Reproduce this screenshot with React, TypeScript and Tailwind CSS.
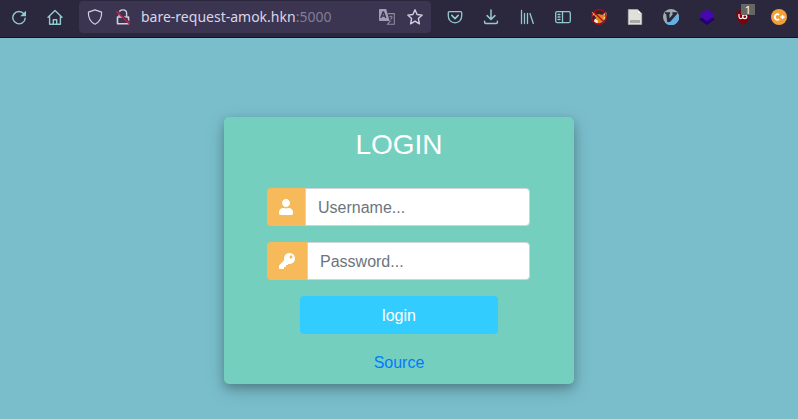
import type { ReactNode } from "react";
import { FaKey, FaUser } from "react-icons/fa";

function Cell({ children, label }: { children: ReactNode; label: string }) {
  return (
    <button aria-label={label} className="flex h-[34px] w-9 shrink-0 items-center justify-center">
      {children}
    </button>
  );
}

const line = {
  width: 16,
  height: 16,
  viewBox: "0 0 16 16",
  fill: "none",
  stroke: "currentColor",
  strokeWidth: 1.2,
  strokeLinecap: "round",
  strokeLinejoin: "round",
} as const;

function Toolbar() {
  return (
    <header className="flex h-[38px] items-start border-b border-[#15131f] bg-[#2b273c] text-[#91cbd0]">
      <div className="flex w-[79px] shrink-0 pl-px">
        <Cell label="Reload">
          <svg {...line} strokeWidth="1.4">
            <path d="M12.9 4.8A6.2 6.2 0 1 0 14.2 9.2" />
            <path d="M15 1.8v5.4H9.2z" fill="currentColor" stroke="none" />
          </svg>
        </Cell>
        <Cell label="Home">
          <svg {...line} strokeWidth="1.4">
            <path d="M1 8.3 8 1.6l7 6.7M2.6 7.2v8h10.8v-8M6.3 15v-4.3h3.4V15" />
          </svg>
        </Cell>
      </div>
      <div className="mt-px flex h-8 w-[352px] items-center rounded-[4px] bg-[#3b3552] pl-2 text-[#d2cedf]">
        <svg {...line}>
          <path d="M8 .9 14.6 3.1C14.9 9.1 12.5 13 8 15.2 3.5 13 1.1 9.1 1.4 3.1z" />
        </svg>
        <svg {...line} className="ml-3" strokeLinecap="butt">
          <path d="M4.2 7.5V4.2c0-4.4 7.4-4.4 7.4 0v3.3" strokeWidth="1.4" />
          <path d="M2.5 8h11v6.8h-11z" strokeWidth="1.6" />
          <path d="m2.3 1.8 12.8 12.2" stroke="#3b3552" strokeWidth="1.4" />
          <path d="m1.2 2.2 13.2 12.8" stroke="#d7143f" strokeWidth="1.4" />
        </svg>
        <span className="ml-[10px] whitespace-nowrap font-['Noto_Sans',sans-serif] text-[14px] leading-5 text-[#dad6e6]">
          bare-request-amok.hkn<span className="text-[#827d95]">:5000</span>
        </span>
        <div className="ml-auto flex pr-2">
          <svg width="16" height="16" viewBox="0 0 16 16">
            <path d="M9 4.6h6.3v10.7H8.5L11 12" stroke="#8f8aa2" strokeWidth="1.1" fill="none" />
            <path d="M1 0h6.2l.9 3 2.5 9H1a1 1 0 0 1-1-1V1a1 1 0 0 1 1-1z" fill="#a29db3" />
            <path d="m1.8 9 2.3-6h.4l2.3 6M2.6 7h3.4" stroke="#3b3552" strokeWidth="1.4" fill="none" />
            <path d="M10.7 8c.6-1.2 2.7-.8 2.3.5-.2.8-1.2.9-1.2 2.1M11.8 11.7v1.1" stroke="#8f8aa2" strokeWidth="1.1" fill="none" />
          </svg>
          <svg {...line} className="ml-3" strokeWidth="1.4">
            <path d="m8 .8 2.1 4.7 5.1.6-3.8 3.5 1 5.2L8 12.2l-4.4 2.6 1-5.2L.8 6.1l5.1-.6z" />
          </svg>
        </div>
      </div>
      <nav className="ml-[6px] flex shrink-0">
        <Cell label="Pocket">
          <svg {...line} strokeWidth="1.3">
            <path d="M2.3 2.6h11.4a1 1 0 0 1 1 1V7c0 4-2.8 6.8-6.7 6.8S1.3 11 1.3 7V3.6a1 1 0 0 1 1-1z" />
            <path d="m4.8 6.4 3.2 3.2 3.2-3.2" strokeWidth="1.6" />
          </svg>
        </Cell>
        <Cell label="Downloads">
          <svg {...line} strokeWidth="1.5">
            <path d="M8 .9v9.4M4.1 6.6 8 10.5l3.9-3.9M1.6 12.3v1c0 .7.5 1.2 1.2 1.2h10.4c.7 0 1.2-.5 1.2-1.2v-1" />
          </svg>
        </Cell>
        <Cell label="Library">
          <svg {...line} strokeWidth="1.3">
            <path d="M2.5 1.5v13M5.5 4.5v10M8.5 4.5v10M11 4.5l3.3 10" />
          </svg>
        </Cell>
        <Cell label="Sidebar">
          <svg {...line} strokeWidth="1.3">
            <rect x=".7" y="2.6" width="14.6" height="11" rx="1.5" />
            <path d="M7.5 2.6v11M3 5.5h2M3 8h2M3 10.5h2" />
          </svg>
        </Cell>
        <Cell label="FoxyProxy">
          <svg width="16" height="16" viewBox="0 0 16 16">
            <circle cx="8" cy="8" r="7" fill="#35202d" />
            <path d="m1 3 3.4 2.7L8 5l3.2 1 3.3-2.5.5 5-3 4.5-4 1.5-4.5-1L5 9z" fill="#df8420" />
            <path d="m.8 3 2.8 1.2-2 3.2zM4 9.5 7.2 12l-1 2.6-3.5-2zM12.5 5l2.7-1.8.4 3.8z" fill="#eee9e1" />
            <path d="M12.5 8.5 14 8l-1 3z" fill="#fff" />
            <circle cx="8" cy="8" r="7.3" fill="none" stroke="#b30b12" strokeWidth="1.2" />
            <path d="m2.8 2.8 10.4 10.4" stroke="#b30b12" strokeWidth="1.3" />
          </svg>
        </Cell>
        <Cell label="Page">
          <svg width="16" height="16" viewBox="0 0 16 16">
            <path d="M1.3.5h9.4l4 4v11H1.3z" fill="#e0e0dc" stroke="#b7b7b4" strokeWidth=".7" />
            <path d="M10.5.7v4h4z" fill="#fff" stroke="#bcbcbc" strokeWidth=".5" />
            <path d="M3.5 11.7h9v1.6h-9z" fill="#bbb" stroke="#777" strokeWidth=".6" />
          </svg>
        </Cell>
        <Cell label="Vimium">
          <svg width="16" height="16" viewBox="0 0 16 16">
            <circle cx="8" cy="8" r="8" fill="#a4a7ab" />
            <path d="M15.8 6A8 8 0 0 1 1.7 13z" fill="#65afe1" />
            <path d="M2 3.3h5.2v1.3l-.8.4.2 4.2L10 5l-.7-.4V3.3h5v1.5L7 13H4.2L3.2 5 2 4.7z" fill="#202a40" />
          </svg>
        </Cell>
        <Cell label="Layers">
          <svg width="16" height="16" viewBox="0 0 16 16">
            <path d="m0 10.2 8-4 8 4-8 5.8z" fill="#24006f" />
            <path d="m0 6.2 8-6 8 6-8 6z" fill="#4807b3" />
          </svg>
        </Cell>
        <div className="relative">
          <Cell label="uBlock Origin">
            <svg width="16" height="16" viewBox="0 0 16 16">
              <path d="M8 0c2 1.4 4.3 2 6.6 2 .2 6.5-.8 10.4-6.6 14C2.2 12.4 1.2 8.5 1.4 2 3.7 2 6 1.4 8 0z" fill="#800009" />
              <path d="M4 5v2.8c0 2.5 3.8 2.5 3.8 0V5v2.8c0 2.5 4 2.5 4 0s-4-2.5-4 0" fill="none" stroke="#fff" strokeWidth="1.2" />
            </svg>
          </Cell>
          <span className="absolute left-[16px] top-[4px] flex h-[11px] w-[14px] items-center justify-center bg-[#666] font-['Noto_Sans',sans-serif] text-[11px] leading-none text-white">
            1
          </span>
        </div>
        <Cell label="Cookie manager">
          <svg width="16" height="16" viewBox="0 0 16 16">
            <circle cx="8" cy="8" r="8" fill="#f2a13a" />
            <path d="M8.2 5.9A2.7 2.7 0 1 0 8.2 10.1" fill="none" stroke="#fff" strokeWidth="1.7" />
            <path d="M9.4 8h4.2M11.5 5.9v4.2" fill="none" stroke="#fff" strokeWidth="1.5" />
          </svg>
        </Cell>
      </nav>
    </header>
  );
}

function Field({ type, placeholder, icon }: { type: string; placeholder: string; icon: ReactNode }) {
  return (
    <div className="flex h-[38px] w-[263px]">
      <span className="flex shrink-0 items-center rounded-l-[4px] bg-[#f7ba5b] pl-3 pr-3 text-white">{icon}</span>
      <input
        type={type}
        placeholder={placeholder}
        aria-label={placeholder}
        className="h-[38px] min-w-0 flex-1 rounded-r-[4px] border border-[#ced4da] bg-white px-3 pb-[5px] pt-[7px] text-base text-[#495057] outline-none placeholder:text-[#6c757d]"
      />
    </div>
  );
}

export default function App() {
  return (
    <div className="flex h-[419px] w-[798px] flex-col overflow-hidden bg-[#7abecc] font-['Liberation_Sans',Arial,sans-serif]">
      <Toolbar />
      <main className="flex flex-1 justify-center pt-[79px]">
        <section className="flex h-[267px] w-[350px] flex-col items-center rounded-[5px] bg-[#74cfbf] pt-[11px] shadow-[0_4px_8px_0_rgba(0,0,0,0.2),0_6px_20px_0_rgba(0,0,0,0.19)]">
          <h1 className="text-[28px] leading-[34px] text-white">LOGIN</h1>
          <form className="mt-[26px] flex flex-col items-center" onSubmit={(e) => e.preventDefault()}>
            <div className="flex w-[264px] flex-col gap-4">
              <Field type="text" placeholder="Username..." icon={<FaUser className="h-4 w-[14px]" />} />
              <Field type="password" placeholder="Password..." icon={<FaKey className="h-4 w-4" />} />
            </div>
            <button className="mt-4 h-[38px] w-[198px] rounded-[4px] bg-[#33ccff] pt-0.5 text-base text-white">login</button>
          </form>
          <a href="#source" className="mt-[17px] text-base leading-6 text-[#007bff]">
            Source
          </a>
        </section>
      </main>
    </div>
  );
}
